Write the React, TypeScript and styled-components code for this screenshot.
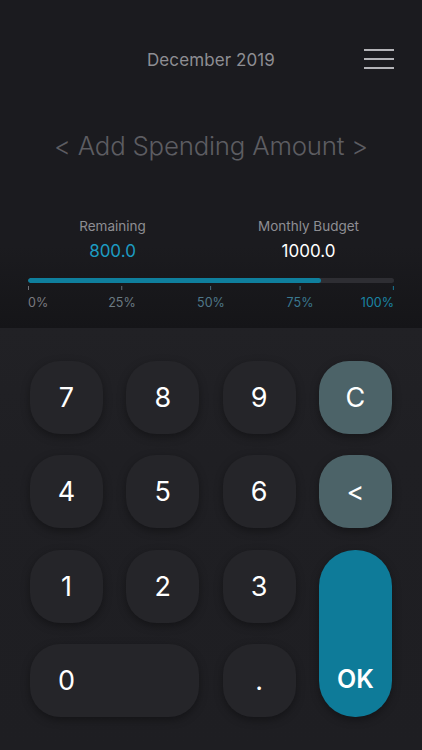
import React from "react";
import styled, { createGlobalStyle } from "styled-components";

const Global = createGlobalStyle`
  html, body { margin: 0; padding: 0; background: #1f1f23; }
  body { font-family: Inter, "Noto Sans", "Liberation Sans", sans-serif; -webkit-font-smoothing: antialiased; }
  * { box-sizing: border-box; }
`;

const Screen = styled.div`
  width: 422px;
  height: 750px;
  display: flex;
  flex-direction: column;
  overflow: hidden;
  background: #1f1f23;
`;

const Top = styled.div`
  height: 328px;
  display: flex;
  flex-direction: column;
  background: linear-gradient(180deg, #1b1b1f 0%, #1b1b1f 75%, #151518 100%);
  padding: 0 28px;
`;

const Header = styled.div`
  height: 60px;
  margin-top: 30px;
  display: flex;
  align-items: center;
  justify-content: center;
  position: relative;
`;

const Month = styled.div`
  font-size: 17px;
  color: #8e8e93;
  letter-spacing: 0.1px;
`;

const Burger = styled.div`
  position: absolute;
  right: 0;
  top: 19px;
  width: 30px;
  display: flex;
  flex-direction: column;
  gap: 7.6px;
`;

const BurgerLine = styled.span`
  display: block;
  height: 1.6px;
  background: #b4b4b8;
`;

const Prompt = styled.div`
  margin-top: 40px;
  text-align: center;
  font-size: 25.8px;
  font-weight: 300;
  color: #5d5d62;
  letter-spacing: -0.2px;
`;

const Stats = styled.div`
  margin-top: 56px;
  display: grid;
  grid-template-columns: 1fr 1fr;
`;

const Stat = styled.div<{ $shift: number }>`
  display: flex;
  flex-direction: column;
  align-items: center;
  transform: translateX(${(p) => p.$shift}px);
`;

const StatLabel = styled.div`
  font-size: 13.5px;
  color: #8e8e93;
  line-height: 18px;
`;

const StatValue = styled.div<{ $accent?: boolean }>`
  margin-top: 5px;
  font-size: 17px;
  line-height: 22px;
  color: ${(p) => (p.$accent ? "#1d9cc2" : "#ffffff")};
`;

const Track = styled.div`
  margin-top: 16px;
  height: 5px;
  border-radius: 3px;
  background: #2e2e33;
  overflow: hidden;
`;

const Fill = styled.div`
  height: 100%;
  background: #0f7f9d;
  border-radius: 3px;
`;

const Scale = styled.div`
  position: relative;
  height: 30px;
`;

const Tick = styled.div<{ $color: string; $align: "left" | "center" | "right" }>`
  position: absolute;
  top: 3px;
  display: flex;
  flex-direction: column;
  align-items: ${(p) => (p.$align === "left" ? "flex-start" : p.$align === "right" ? "flex-end" : "center")};
  transform: translateX(${(p) => (p.$align === "left" ? "0" : p.$align === "right" ? "-100%" : "-50%")});
  color: ${(p) => p.$color};
`;

const TickMark = styled.span`
  width: 1px;
  height: 4px;
  background: currentColor;
  opacity: 0.9;
`;

const TickLabel = styled.span`
  margin-top: 5px;
  font-size: 12.5px;
  line-height: 16px;
`;

const Pad = styled.div`
  flex: 1;
  background: linear-gradient(180deg, #212125 0%, #1f1f23 30%, #1e1e22 100%);
  padding: 33px 30px 0 30px;
  display: grid;
  grid-template-columns: repeat(4, 73px);
  grid-template-rows: repeat(4, 73px);
  justify-content: space-between;
  row-gap: 21.3px;
`;

const Key = styled.button<{ $variant?: "num" | "fn" | "ok"; $wide?: boolean; $tall?: boolean }>`
  border: none;
  margin: 0;
  font-family: inherit;
  color: #ffffff;
  font-size: 27px;
  font-weight: 400;
  display: flex;
  align-items: ${(p) => (p.$tall ? "flex-end" : "center")};
  justify-content: ${(p) => (p.$wide ? "flex-start" : "center")};
  padding: ${(p) => (p.$wide ? "0 0 0 28px" : p.$tall ? "0 0 23px 0" : "0")};
  grid-column: ${(p) => (p.$wide ? "span 2" : "auto")};
  grid-row: ${(p) => (p.$tall ? "span 2" : "auto")};
  border-radius: ${(p) => (p.$tall ? "36px" : "30px")};
  background: ${(p) => (p.$variant === "fn" ? "#4c6368" : p.$variant === "ok" ? "#0e7b99" : "#252529")};
  box-shadow: 0 3px 8px rgba(0, 0, 0, 0.35);
  ${(p) => (p.$variant === "ok" ? "font-weight: 600; font-size: 25px;" : "")}
`;

const ticks: { label: string; pos: number; color: string; align: "left" | "center" | "right" }[] = [
  { label: "0%", pos: 0, color: "#7a7a80", align: "left" },
  { label: "25%", pos: 94, color: "#6b7a82", align: "center" },
  { label: "50%", pos: 183, color: "#4f7789", align: "center" },
  { label: "75%", pos: 272, color: "#3a7890", align: "center" },
  { label: "100%", pos: 366, color: "#1a84a4", align: "right" },
];

export default function App() {
  const remaining = 800;
  const budget = 1000;
  return (
    <Screen>
      <Global />
      <Top>
        <Header>
          <Month>December 2019</Month>
          <Burger>
            <BurgerLine />
            <BurgerLine />
            <BurgerLine />
          </Burger>
        </Header>
        <Prompt>&lt; Add Spending Amount &gt;</Prompt>
        <Stats>
          <Stat $shift={-7}>
            <StatLabel>Remaining</StatLabel>
            <StatValue $accent>800.0</StatValue>
          </Stat>
          <Stat $shift={6}>
            <StatLabel>Monthly Budget</StatLabel>
            <StatValue>1000.0</StatValue>
          </Stat>
        </Stats>
        <Track>
          <Fill style={{ width: `${(remaining / budget) * 100}%` }} />
        </Track>
        <Scale>
          {ticks.map((t) => (
            <Tick key={t.label} $color={t.color} $align={t.align} style={{ left: t.pos }}>
              <TickMark />
              <TickLabel>{t.label}</TickLabel>
            </Tick>
          ))}
        </Scale>
      </Top>
      <Pad>
        <Key>7</Key>
        <Key>8</Key>
        <Key>9</Key>
        <Key $variant="fn">C</Key>
        <Key>4</Key>
        <Key>5</Key>
        <Key>6</Key>
        <Key $variant="fn">&lt;</Key>
        <Key>1</Key>
        <Key>2</Key>
        <Key>3</Key>
        <Key $variant="ok" $tall>OK</Key>
        <Key $wide>0</Key>
        <Key>.</Key>
      </Pad>
    </Screen>
  );
}
